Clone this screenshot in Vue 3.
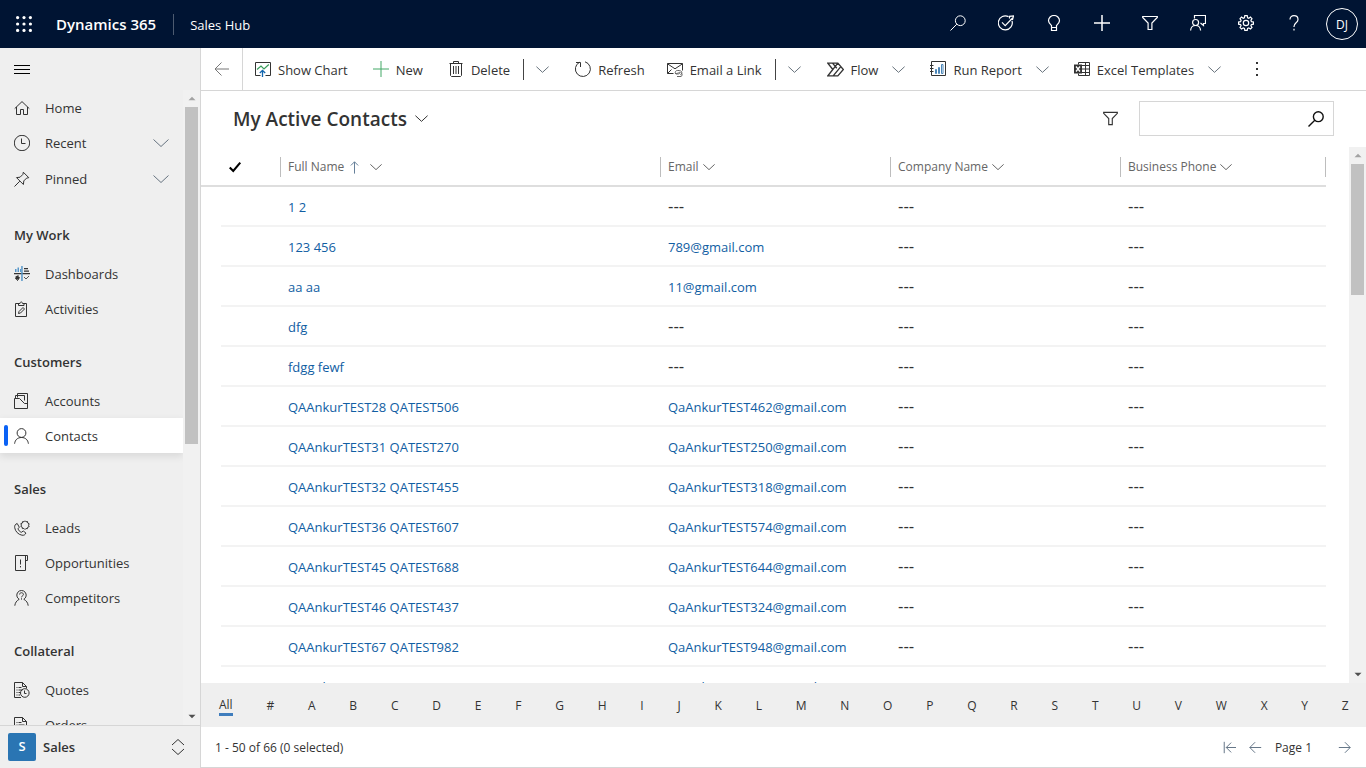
<script setup>
import { h } from 'vue'

const icons = {
  waffle: '<g fill="currentColor" stroke="none"><circle cx="1.6" cy="1.6" r="1.6"/><circle cx="8" cy="1.6" r="1.6"/><circle cx="14.4" cy="1.6" r="1.6"/><circle cx="1.6" cy="8" r="1.6"/><circle cx="8" cy="8" r="1.6"/><circle cx="14.4" cy="8" r="1.6"/><circle cx="1.6" cy="14.4" r="1.6"/><circle cx="8" cy="14.4" r="1.6"/><circle cx="14.4" cy="14.4" r="1.6"/></g>',
  search: '<circle cx="10.3" cy="5.7" r="4.9"/><path d="M6.8 9.2L.5 15.5"/>',
  target: '<path stroke-width="1.2" d="M10.500 1.600A7 7 0 1 0 14 5.800M4 7.400l3.200 3.200L14.600 3M11.500 3.600V1.300L15.600.8l-1 3.700h-2.300"/>',
  bulb: '<path stroke-width="1.2" d="M5.5 12.500v-2C4 9 2.5 7.700 2.500 5.800a5.500 5.300 0 0 1 11 0C13.500 7.700 12 9 10.500 10.500v5h-5v-3h5"/>',
  plus: '<path d="M8 0v16M0 8h16"/>',
  bigplus: '<path stroke-width="1.500" d="M8 0v16M0 8h16"/>',
  filter: '<path stroke-width="1.2" d="M.7 1.500h14.600v1L9.900 8v6.500H6.100V8L.7 2.500z"/>',
  assist: '<g stroke-width="1.2"><circle cx="5.600" cy="7.500" r="3"/><path d="M.6 15.500c.2-3 2.200-5 5-5s4.800 2 5 5M4.500 3.500v-3h11v8h-2v2l-3-2.500"/></g>',
  gear: '<g stroke-width="1.2"><path d="M6.800.7h2.400l.4 2 1.200.5 1.700-1.100 1.500 1.600-1.100 1.700.5 1.200 2 .4v2.200l-2 .4-.5 1.200 1.100 1.700-1.500 1.500-1.700-1.100-1.200.5-.4 2H6.800l-.4-2-1.200-.5L3.500 14 2 12.500l1.100-1.700-.5-1.200-2-.4V7l2-.4.5-1.200L2 3.700l1.500-1.600 1.700 1.100 1.200-.5z"/><circle cx="8" cy="8" r="2.700"/></g>',
  help: '<path stroke-width="1.2" d="M4 4.500C4 2 5.700.7 8 .7s4 1.400 4 3.700c0 3.400-4 3.300-4 7.100v.5M8 13.800v1.800"/>',
  menu: '<path d="M0 4.500h16M0 8.500h16M0 12.500h16"/>',
  home: '<path d="M.7 8.600L8 1.600l7.300 7M2.500 7v7.500h4v-5h3v5h4V7"/>',
  clock: '<circle cx="8" cy="8" r="7.700"/><path d="M7.500 3.500v5h4"/>',
  pin: '<path d="M9.300 1.200l5.500 5.500-2.200.4-2.800 2.800-.4 3.600-6.900-6.900 3.600-.4 2.800-2.800zM5.800 10.200L.5 15.500"/>',
  chevron: '<path d="M.5 4.500L8 11.500l7.500-7"/>',
  dashboard: '<g stroke="none"><path fill="#333" d="M0 7h16v1.300H0zM10 2h4v1.200h-4zM10 4.500h5v1.200h-5zM1.500 10.500l3-1.500v1.500l1.500 1-1.500 2.500-3-1z"/><path fill="#5797c9" d="M1 3h1.500v3H1zM3.500 1.500H5V6H3.500zM6 3h1v3H6zM7.200 0h1.500v15H7.200z"/></g><path stroke="#555" d="M10 11l2 2 3-3M1 12l3 3"/>',
  activity: '<path d="M5.500 2.500h-4v13h11v-13h-3M4.500 4.500v-2h1.500c0-2 2.500-2 2.500 0H10v2z"/><path d="M4.500 12.500l.5-2 4-4 1.500 1.500-4 4z"/>',
  account: '<path d="M3.500 4.500v-4h10v11M1.500 5V2.500h9v5"/><path d="M.5 15.500v-10h5l5 5h3v5z"/>',
  contact: '<circle cx="7.500" cy="5" r="4.400"/><path d="M.6 15.700C1 12 3.500 9.500 7.500 9.500s6.500 2.500 6.900 6.200"/>',
  lead: '<path d="M3.200 3.500c-2 .6-2.800 2.200-2.500 4.200.6 3.700 3.500 6.800 7.200 7.500 2 .4 3.300-.4 4-2.200l-2.600-2-2 1.300c-1.600-.6-2.800-2-3.300-3.500l1.300-1.600z"/><path d="M11 .8l1 1 1.500-.3.2 1.500 1.500.8-.7 1.400.7 1.400-1.500.6-.3 1.500-1.500-.2L11 9.500 9.900 8.400l-1.500.2-.2-1.500-1.400-.7.7-1.300-.7-1.400 1.500-.6.300-1.500 1.400.2z"/>',
  opportunity: '<path d="M11.500 15.500H1.500V.5h12v5h-2zM11.500.5v14"/><path d="M6.500 4.500v5M6.500 11v1.400"/>',
  competitor: '<path d="M5.200 9.300A4.700 4.700 0 1 1 9.800 9.300M.8 15.700C1 13 2.700 10.500 5.200 9.300M9.800 9.300c2.500 1.200 4.200 3.700 4.400 6.400M5.600 4.500C5.600 2 9.400 2.200 9.400 4.500c0 1.500-1.900 1.300-1.900 2.800M7.500 8.300v1.300"/>',
  quote: '<path d="M7 15.500H.5V.5h8l4 4v2M8.500.5v4h4"/><path d="M2.500 5.500h1M4.500 5.500h3M2.500 8h1M4.500 8h4M2.500 10.500h1M4.500 10.500h2M2.500 13h1M4.500 13H6"/><circle cx="10.800" cy="11" r="4.300"/><path d="M10.500 8.500v3h2"/>',
  order: '<path d="M.5 15.500V.5h8l4 4v11zM8.500.5v4h4M2.500 5.500h1M4.500 5.500h3M2.500 8h1M4.500 8h6M2.500 10.500h1M4.500 10.500h6"/>',
  back: '<path d="M15 8H1M7.500 1.500L1 8l6.500 6.500"/>',
  forward: '<path d="M1 8h14M8.500 1.500L15 8l-6.500 6.500"/>',
  first: '<path d="M1.500 1v14M16 8H4M10 2L4 8l6 6"/>',
  up: '<path d="M8 15.500V1M3.500 5.500L8 1l4.500 4.500"/>',
  chart: '<path d="M5.500 14.500h-5v-13h15v13h-5"/><path stroke="#3a9d5c" stroke-width="1.200" d="M2 8.500L6 5l3 3 4.800-4.500"/><path stroke="#1165ae" stroke-width="1.300" d="M7.500 16V9.500M4.800 12l2.700-2.700 2.700 2.700"/>',
  trash: '<path d="M1.500 2.500h13M5.500 2.500v-2h5v2M2.500 2.500v12l1 1h9l1-1v-12M5.500 5v8M8 5v8M10.500 5v8"/>',
  refresh: '<path d="M10 .8a7.500 7.500 0 1 1-5.500.5M1 1.500h4.500V6"/>',
  mail: '<path d="M6.500 12.500h-6v-10h15v7M.5 2.800l7.500 5 7.500-5M.5 12.500l4-4"/><path stroke="#666" d="M9.500 13.500c-2-1-1.500-4 .800-4h2c3 0 3.500 4 1 4.200M8 12.500c2.500.5 5-1.500 5-1.500 1 1-2 3-3.500 1.500M10 15.500h4c1.500-.5 1.500-3 0-3.500"/>',
  flow: '<path stroke-width="1.300" d="M.8 2h9.400l5.200 6-5.200 6H.8l4.700-6zM5.200 2l4 4.800M.8 14L10.200 2M5.800 14l7.200-8.700"/>',
  report: '<path d="M1.500.5h14v14h-14zM0 4.500h3.500M0 7.500h3.500M0 10.500h3.500"/><path stroke="#4b86b8" d="M5.500 8.500h1v4h-1zM8.500 6.500h1v6h-1zM11.500 3.500h1.500v9h-1.500z"/>',
  excel: '<path d="M4.500 3.500v-2h11v13h-11v-2M8 4.500h7.500M8 8h7.500M8 11.500h7.500M11.500 1.500v13"/><path fill="#333" stroke="none" d="M0 3.500h8v9H0z"/><path stroke="#fff" stroke-width="1.300" d="M2 5.500l4 5M6 5.500l-4 5"/>',
  dots: '<g fill="currentColor" stroke="none"><path d="M7 1h2v2H7zM7 7h2v2H7zM7 13h2v2H7z"/></g>',
  check: '<path stroke-width="2.400" d="M2 8.500l4 4L14 3"/>',
  updown: '<path d="M2 6l6-5.500L14 6M2 10l6 5.500 6-5.500"/>',
  triangle: '<path fill="currentColor" stroke="none" d="M8 4.500l7 7H1z"/>'
}

const Icon = (props) => h('svg', {
  viewBox: '0 0 16 16', width: props.size || 16, height: props.size || 16,
  fill: 'none', stroke: 'currentColor', 'stroke-width': 16 / (props.size || 16), 'aria-hidden': 'true',
  innerHTML: icons[props.name]
})
Icon.props = ['name', 'size']

const topActions = [
  ['search', 'Search'], ['target', 'Task flow'], ['bulb', 'Insights'], ['bigplus', 'Quick create'],
  ['filter', 'Advanced find'], ['assist', 'Assistant'], ['gear', 'Settings'], ['help', 'Help']
]
const groups = [
  { items: [['home', 'Home'], ['clock', 'Recent', true], ['pin', 'Pinned', true]] },
  { title: 'My Work', items: [['dashboard', 'Dashboards'], ['activity', 'Activities']] },
  { title: 'Customers', items: [['account', 'Accounts'], ['contact', 'Contacts']] },
  { title: 'Sales', items: [['lead', 'Leads'], ['opportunity', 'Opportunities'], ['competitor', 'Competitors']] },
  { title: 'Collateral', items: [['quote', 'Quotes'], ['order', 'Orders']] }
]
const commands = [
  { icon: 'chart', text: 'Show Chart' },
  { icon: 'plus', text: 'New' },
  { icon: 'trash', text: 'Delete', split: true },
  { icon: 'refresh', text: 'Refresh' },
  { icon: 'mail', text: 'Email a Link', split: true },
  { icon: 'flow', text: 'Flow', menu: true },
  { icon: 'report', text: 'Run Report', menu: true },
  { icon: 'excel', text: 'Excel Templates', menu: true }
]
const columns = ['Full Name', 'Email', 'Company Name', 'Business Phone']
const rows = [
  ['1 2', ''], ['123 456', '789@gmail.com'], ['aa aa', '11@gmail.com'], ['dfg', ''], ['fdgg fewf', ''],
  ['QAAnkurTEST28 QATEST506', 'QaAnkurTEST462@gmail.com'],
  ['QAAnkurTEST31 QATEST270', 'QaAnkurTEST250@gmail.com'],
  ['QAAnkurTEST32 QATEST455', 'QaAnkurTEST318@gmail.com'],
  ['QAAnkurTEST36 QATEST607', 'QaAnkurTEST574@gmail.com'],
  ['QAAnkurTEST45 QATEST688', 'QaAnkurTEST644@gmail.com'],
  ['QAAnkurTEST46 QATEST437', 'QaAnkurTEST324@gmail.com'],
  ['QAAnkurTEST67 QATEST982', 'QaAnkurTEST948@gmail.com'],
  ['QAAnkurTEST78 QATEST675', 'QaAnkurTEST956@gmail.com']
]
const letters = ['All', '#', ...'ABCDEFGHIJKLMNOPQRSTUVWXYZ']
</script>

<template>
  <div class="app">
    <header class="topbar">
      <button class="waffle" aria-label="App launcher"><Icon name="waffle" /></button>
      <a class="brand" href="#">Dynamics 365</a>
      <a class="hub" href="#">Sales Hub</a>
      <div class="top-actions">
        <button v-for="[icon, label] in topActions" :key="icon" :aria-label="label"><Icon :name="icon" /></button>
        <button aria-label="Account"><span class="avatar">DJ</span></button>
      </div>
    </header>

    <div class="body">
      <aside class="sidebar">
        <button class="hamburger" aria-label="Toggle navigation"><Icon name="menu" /></button>
        <div class="nav-area">
          <nav>
            <section v-for="(group, i) in groups" :key="i" class="group">
              <h2 v-if="group.title">{{ group.title }}</h2>
              <a v-for="[icon, text, more] in group.items" :key="text" href="#" class="item" :class="{ more, active: text === 'Contacts' }">
                <Icon :name="icon" /><span>{{ text }}</span>
                <Icon v-if="more" class="more-icon" name="chevron" />
              </a>
            </section>
          </nav>
          <div class="scrollbar side-scroll">
            <Icon name="triangle" size="8" class="arrow" />
            <div class="track"><div class="thumb"></div></div>
            <Icon name="triangle" size="8" class="arrow down" />
          </div>
        </div>
        <button class="area"><span class="tile">S</span><span class="area-name">Sales</span><Icon name="updown" /></button>
      </aside>

      <main>
        <div class="commands">
          <button class="back" aria-label="Back"><Icon name="back" /></button>
          <div v-for="c in commands" :key="c.text" class="command" :class="[c.icon, { split: c.split, menu: c.menu }]">
            <button class="cmd"><Icon :name="c.icon" :size="c.icon === 'flow' ? 17 : 16" /><span>{{ c.text }}</span></button>
            <button v-if="c.split || c.menu" class="drop" :aria-label="c.text + ' options'"><Icon name="chevron" size="13" /></button>
          </div>
          <button class="overflow" aria-label="More commands"><Icon name="dots" /></button>
        </div>

        <div class="view-bar">
          <button class="view"><h1>My Active Contacts</h1><Icon name="chevron" size="13" /></button>
          <button class="filter" aria-label="Filter"><Icon name="filter" size="15" /></button>
          <div class="search">
            <input type="text" aria-label="Search contacts">
            <button aria-label="Start search"><Icon name="search" /></button>
          </div>
        </div>

        <div class="grid-area">
          <div class="grid-view">
            <table>
              <colgroup><col class="c-check"><col class="c-name"><col class="c-email"><col class="c-email"><col></colgroup>
              <thead>
                <tr>
                  <th><button class="check" aria-label="Select all"><Icon name="check" size="14" /></button></th>
                  <th v-for="(c, i) in columns" :key="c">
                    <button class="head">{{ c }}<Icon v-if="i === 0" name="up" size="13" class="sort" /><Icon name="chevron" size="12" /></button>
                  </th>
                </tr>
              </thead>
              <tbody>
                <tr v-for="r in rows" :key="r[0]">
                  <td></td>
                  <td><a href="#">{{ r[0] }}</a></td>
                  <td><a v-if="r[1]" href="#">{{ r[1] }}</a><span v-else class="empty">---</span></td>
                  <td><span class="empty">---</span></td>
                  <td><span class="empty">---</span></td>
                </tr>
              </tbody>
            </table>
          </div>
          <div class="scrollbar grid-scroll">
            <Icon name="triangle" size="8" class="arrow" />
            <div class="track"><div class="thumb"></div></div>
            <Icon name="triangle" size="8" class="arrow down" />
          </div>
        </div>

        <div class="letters">
          <button v-for="l in letters" :key="l" :class="{ current: l === 'All' }">{{ l }}</button>
        </div>

        <footer>
          <span>1 - 50 of 66 (0 selected)</span>
          <div class="pager">
            <button aria-label="First page"><Icon name="first" size="13" /></button>
            <button aria-label="Previous page"><Icon name="back" size="13" /></button>
            <span>Page 1</span>
            <button aria-label="Next page"><Icon name="forward" size="13" /></button>
          </div>
        </footer>
      </main>
    </div>
  </div>
</template>

<style>
body { margin: 0; }
</style>

<style scoped>
* { box-sizing: border-box; }
.app { height: 100vh; display: flex; flex-direction: column; overflow: hidden; font: 13px/20px "Open Sans", "Noto Sans", sans-serif; color: #333; background: #fff; }
button { font: inherit; color: inherit; background: none; border: 0; padding: 0; display: flex; align-items: center; cursor: pointer; }
a { text-decoration: none; color: inherit; }
svg { display: block; flex: none; }
h1, h2 { margin: 0; font-weight: 600; }

.topbar { height: 48px; flex: none; display: flex; align-items: center; background: #001433; color: #fff; }
.waffle { width: 48px; height: 48px; justify-content: center; }
.brand { font-size: 15px; font-weight: 600; padding: 0 17px 0 8px; }
.hub { border-left: 1px solid #4d5b70; padding: 1px 0 0 16px; }
.top-actions { margin-left: auto; display: flex; }
.top-actions button { width: 48px; height: 46px; justify-content: center; }
.top-actions button:last-child { height: 48px; }
.avatar { width: 32px; height: 32px; border: 1px solid #fff; border-radius: 50%; font-size: 12px; line-height: 32px; }

.body { flex: 1; min-height: 0; display: flex; }
.sidebar { width: 201px; flex: none; display: flex; flex-direction: column; background: #efefef; border-right: 1px solid #d6d6d6; }
.hamburger { height: 42px; padding-left: 14px; color: #000; }
.nav-area { flex: 1; min-height: 0; display: flex; }
nav { flex: 1; overflow: hidden; }
.group { margin-bottom: 14px; }
.group:first-child { margin-bottom: 16px; }
.group h2 { height: 43px; line-height: 44px; font-size: 13px; padding-left: 14px; }
.item { height: 35px; display: flex; align-items: center; gap: 15px; padding-left: 14px; }
.item.more { height: 36px; }
.more-icon { margin-left: auto; margin-right: 14px; color: #667380; }
.item.active { background: #fff; box-shadow: 0 3px 8px rgba(0, 0, 0, .1); padding-left: 4px; }
.item.active::before { content: ""; width: 4px; height: 21px; border-radius: 2px; background: #0b62f5; margin-right: -9px; }
.scrollbar { width: 17px; flex: none; display: flex; flex-direction: column; align-items: center; background: #f1f1f1; }
.arrow { height: 17px; color: #a3a3a3; }
.arrow.down { transform: rotate(180deg); color: #505050; }
.track { flex: 1; width: 13px; }
.thumb { background: #c1c1c1; }
.side-scroll .thumb { height: 56%; }
.grid-scroll .thumb { height: 26%; }
.area { height: 43px; flex: none; border-top: 1px solid #d6d6d6; padding: 0 14px 0 8px; font-weight: 600; }
.tile { width: 28px; height: 28px; line-height: 26px; border-radius: 2px; background: #2a75b3; color: #fff; }
.area-name { flex: 1; text-align: left; padding-left: 7px; }

main { flex: 1; min-width: 0; display: flex; flex-direction: column; }
.commands { height: 43px; flex: none; display: flex; border-bottom: 1px solid #d6d6d6; }
.back { width: 42px; justify-content: center; border-right: 1px solid #d6d6d6; color: #777; margin-right: 12px; }
.command { display: flex; align-items: center; margin-right: 25px; white-space: nowrap; }
.cmd { gap: 7px; }
.cmd span { padding-top: 1px; }
.plus svg { color: #43a866; }
.drop { color: #67727c; margin-left: 14px; }
.split { margin-right: 26px; }
.split .drop { border-left: 1px solid #444; height: 21px; padding-left: 12px; margin-left: 13px; }
.refresh { margin-right: 22px; }
.overflow { margin-left: 3px; }

.view-bar { height: 56px; flex: none; display: flex; align-items: center; padding: 0 32px 1px; }
.view { gap: 8px; }
.view h1 { font-size: 19px; line-height: 28px; }
.filter { margin-left: auto; margin-right: 21px; }
.search { width: 195px; height: 35px; display: flex; border: 1px solid #d6d6d6; }
.search input { flex: 1; min-width: 0; border: 0; outline: 0; background: none; padding: 0 8px; font: inherit; }
.search button { width: 35px; justify-content: center; color: #111; }
.search svg { stroke-width: 1.4; }

.grid-area { flex: 1; min-height: 0; display: flex; }
.grid-view { flex: 1; overflow: hidden; padding-right: 23px; }
table { width: 100%; table-layout: fixed; border-collapse: separate; border-spacing: 0; }
.c-check { width: 79px; }
.c-name { width: 380px; }
.c-email { width: 230px; }
th, td { height: 40px; padding: 2px 0 0 8px; text-align: left; font-weight: 400; }
th { border-bottom: 2px solid #dedede; padding-left: 0; }
td { border-bottom: 2px solid #f3f3f3; }
td:first-child { border: 0; background: linear-gradient(#f3f3f3, #f3f3f3) 20px 100% / 100% 2px no-repeat; }
td a { color: #115ea3; }
.empty { font: 15px/20px "DejaVu Sans", sans-serif; }
.check { margin-left: 27px; color: #000; }
.head { width: 100%; height: 20px; border-left: 1px solid #bdbdbd; padding-left: 7px; gap: 4px; font-size: 12px; color: #666; }
th:last-child .head { border-right: 1px solid #bdbdbd; }
.sort { color: #66809a; margin-right: 5px; }

.letters { height: 44px; flex: none; display: flex; align-items: center; justify-content: space-between; padding: 2px 17px 0 18px; background: #efefef; font-size: 12px; }
.letters .current { border-bottom: 3px solid #3f7dbd; line-height: 17px; }
footer { height: 41px; flex: none; display: flex; align-items: center; justify-content: space-between; padding: 1px 15px 0 14px; border-bottom: 1px solid #d6d6d6; font-size: 12px; }
.pager { display: flex; align-items: center; gap: 13px; }
.pager button { color: #667788; }
.pager button:last-child { margin-left: 13px; }
</style>
